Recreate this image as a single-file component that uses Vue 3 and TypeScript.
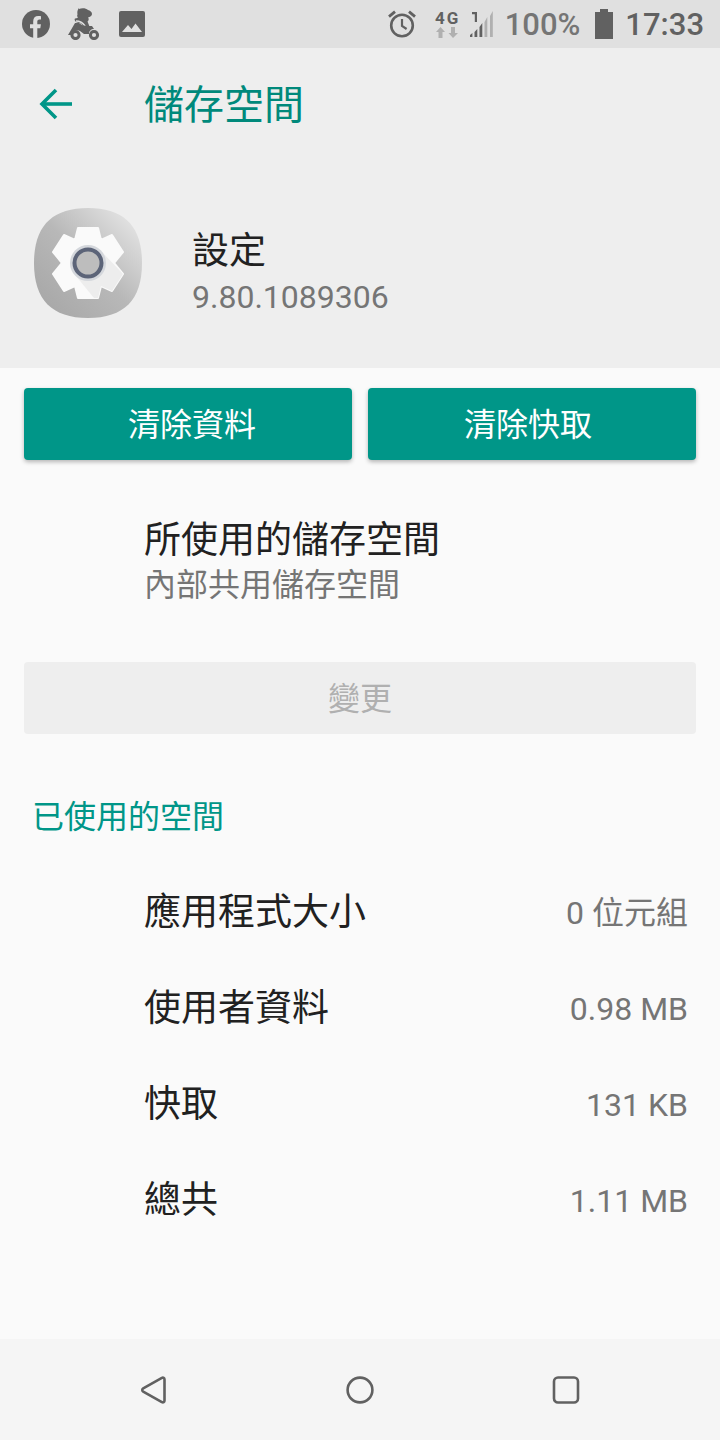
<script setup lang="ts">
interface Row {
  label: string;
  value: string;
}

const rows: Row[] = [
  { label: "應用程式大小", value: "0 位元組" },
  { label: "使用者資料", value: "0.98 MB" },
  { label: "快取", value: "131 KB" },
  { label: "總共", value: "1.11 MB" },
];
</script>

<template>
  <div class="screen">
    <div class="status">
      <div class="status-left">
        <svg class="ic-fb" width="28" height="28" viewBox="0 0 28 28">
          <circle cx="14" cy="14" r="14" fill="#616161" />
          <path d="M11.2 28V18.2H8v-4h3.2v-2.9c0-3.4 2-5.2 5-5.2 1.4 0 2.8.2 2.8.2v3.3h-1.6c-1.6 0-2.1 1-2.1 2v2.6h3.6l-.6 4h-3V28z" fill="#e0e0e0" />
        </svg>
        <svg class="ic-bike" width="32" height="32" viewBox="0 0 32 32">
          <path d="M11 1c3-1.500 7-1 9 1 2 .5 4 2 4 4 0 2-2 3-4 3.500 1 1 1 3-.5 4l2 5 .5 1h-5l-4-4-4-1c-2-1-3-3-2-4 1 0 2-.5 3-1-1-1-1-2-.5-3-.5-2 0-5 1.500-6.500z" fill="#616161" />
          <path d="M8 13c3 0 7 2 9 5" stroke="#e0e0e0" stroke-width="1.600" fill="none" />
          <path d="M7 15l-7 12h3l2-3c2-2 5-2 7-1l4 3h5c0-3 2-5 5-5l-2-3H18l-4-1-3-2z" fill="#616161" />
          <circle cx="7.500" cy="27" r="3.600" fill="#e0e0e0" stroke="#616161" stroke-width="3" />
          <circle cx="26" cy="27" r="3.600" fill="#e0e0e0" stroke="#616161" stroke-width="3" />
        </svg>
        <svg class="ic-img" width="26" height="26" viewBox="0 0 26 26">
          <rect width="26" height="26" rx="2" fill="#616161" />
          <path d="M3 21l6-7 3.500 4 4-5.500L23 21z" fill="#e0e0e0" />
        </svg>
      </div>
      <div class="status-right">
        <svg class="ic-alarm" width="30" height="30" viewBox="0 0 30 30" fill="none" stroke="#616161">
          <circle cx="15" cy="16.500" r="10.800" stroke-width="2.600" />
          <path d="M15 10v7l4.600 3" stroke-width="2.200" />
          <path d="M2 7.600L8 2.600M28 7.600L22 2.600" stroke-width="2.800" />
        </svg>
        <div class="net">
          <span class="net-label">4G</span>
          <svg width="22" height="11" viewBox="0 0 22 11" fill="#b0b0b0">
            <path d="M4.500 0L9 5H6.500v6h-4V5H0z" />
            <path d="M17 11l-4.500-5H15V0h4v6h3z" />
          </svg>
        </div>
        <svg class="ic-signal" width="24" height="30" viewBox="0 0 24 30">
          <path d="M2 3h5v10H4.800V5.200H2z" fill="#616161" />
          <path d="M0 28h2.400v-4L0 26zM4.500 28h2.800v-8l-2.800 3zM9.500 28h2.800V14l-2.800 4z" fill="#616161" />
          <path d="M14.500 28h2.800V8l-2.800 5zM20 28h2.800V2L20 7z" fill="#b0b0b0" />
        </svg>
        <span class="pct">100%</span>
        <svg class="ic-batt" width="18" height="30" viewBox="0 0 18 30">
          <path d="M5 0h8v3h5v27H0V3h5z" fill="#616161" />
        </svg>
        <span class="clock">17:33</span>
      </div>
    </div>

    <header class="head">
      <div class="toolbar">
        <svg class="ic-back" width="34" height="32" viewBox="0 0 34 32" fill="none" stroke="#009688" stroke-width="3.600">
          <path d="M33 16H3" />
          <path d="M17 2L3 16l14 14" />
        </svg>
        <h1 class="title">儲存空間</h1>
      </div>
      <div class="app">
        <svg class="app-icon" width="108" height="110" viewBox="0 0 108 110">
          <defs>
            <linearGradient id="squircle" x1="0.9" y1="0.1" x2="0.1" y2="0.9">
              <stop offset="0" stop-color="#e2e2e2" />
              <stop offset="0.5" stop-color="#b8b8b8" />
              <stop offset="1" stop-color="#a8a8a8" />
            </linearGradient>
          </defs>
          <path d="M54 0C90 0 108 18 108 55s-18 55-54 55S0 92 0 55 18 0 54 0z" fill="url(#squircle)" />
          <path d="M44 20H64L67 32L78 27L89 44L80 55L89 66L78 83L67 78L64 90H44L41 78L30 83L19 66L28 55L19 44L30 27L41 32Z" fill="#fafafa" stroke="#fafafa" stroke-width="2" stroke-linejoin="round" />
          <path d="M68 44L89 66L78 83L67 78L64 90H60L42 68Z" fill="#ededed" />
          <circle cx="54" cy="55" r="18" fill="#d4d7dc" />
          <circle cx="54" cy="55" r="13.500" fill="#bdbdbd" stroke="#5c6478" stroke-width="4" />
        </svg>
        <div class="app-meta">
          <div class="app-name">設定</div>
          <div class="app-ver">9.80.1089306</div>
        </div>
      </div>
    </header>

    <main class="body">
      <div class="actions">
        <button class="btn btn-left" type="button">清除資料</button>
        <button class="btn btn-right" type="button">清除快取</button>
      </div>

      <div class="storage">
        <div class="storage-title">所使用的儲存空間</div>
        <div class="storage-sub">內部共用儲存空間</div>
      </div>

      <div class="change">變更</div>

      <div class="section">已使用的空間</div>

      <div class="rows">
        <div v-for="r in rows" :key="r.label" class="row">
          <span class="row-label">{{ r.label }}</span>
          <span class="row-value">{{ r.value }}</span>
        </div>
      </div>
    </main>

    <nav class="nav">
      <svg width="28" height="28" viewBox="0 0 28 28" fill="none" stroke="#616161" stroke-width="2.600" stroke-linejoin="round">
        <path d="M24.500 3.500c0-1.600-1.300-2.300-2.600-1.600L3.200 12.400c-1.300.8-1.300 2.400 0 3.200l18.700 10.500c1.300.7 2.600 0 2.600-1.600z" />
      </svg>
      <svg width="28" height="28" viewBox="0 0 28 28" fill="none" stroke="#616161" stroke-width="2.600">
        <circle cx="14" cy="14" r="12.400" />
      </svg>
      <svg width="28" height="28" viewBox="0 0 28 28" fill="none" stroke="#616161" stroke-width="2.600">
        <rect x="2" y="1.500" width="24" height="25" rx="4" />
      </svg>
    </nav>
  </div>
</template>

<style scoped>
.screen {
  width: 720px;
  height: 1440px;
  display: flex;
  flex-direction: column;
  overflow: hidden;
  background: #fafafa;
  font-family: "Noto Sans CJK TC", Roboto, sans-serif;
}

.status {
  height: 48px;
  flex: none;
  display: flex;
  justify-content: space-between;
  align-items: center;
  padding: 0 16px 0 22px;
  background: #e0e0e0;
  color: #616161;
  font-family: Roboto, sans-serif;
}
.status-left,
.status-right {
  display: flex;
  align-items: center;
}
.ic-bike {
  margin-left: 18px;
}
.ic-img {
  margin-left: 19px;
}
.ic-alarm {
  margin-right: 18px;
}
.net {
  width: 24px;
  display: flex;
  flex-direction: column;
  align-items: center;
  margin-right: 11px;
}
.net-label {
  font-size: 17px;
  line-height: 17px;
  font-weight: 700;
  letter-spacing: 2px;
  margin-right: -2px;
}
.ic-signal {
  margin-right: 11px;
}
.pct {
  font-size: 31px;
  font-weight: 500;
  color: #757575;
  margin-right: 15px;
}
.ic-batt {
  margin-right: 12px;
}
.clock {
  font-size: 31px;
  font-weight: 500;
}

.head {
  height: 320px;
  flex: none;
  background: #eeeeee;
}
.toolbar {
  height: 112px;
  display: flex;
  align-items: center;
  padding-left: 39px;
}
.title {
  margin: 0 0 4px 71px;
  font-size: 40px;
  font-weight: 400;
  color: #00897b;
}
.app {
  display: flex;
  align-items: flex-start;
  padding: 48px 0 0 34px;
}
.app-meta {
  margin: 16px 0 0 50px;
}
.app-name {
  font-size: 37px;
  line-height: 48px;
  color: #212121;
}
.app-ver {
  font-family: Roboto, sans-serif;
  font-size: 32px;
  line-height: 46px;
  margin-top: 2px;
  color: #757575;
}

.body {
  flex: 1;
  padding: 20px 24px 0;
}
.actions {
  display: flex;
  gap: 16px;
}
.btn {
  flex: 1;
  height: 72px;
  border: none;
  border-radius: 4px;
  background: #009688;
  color: #fff;
  font: inherit;
  font-size: 32px;
  box-shadow: 0 2px 4px rgba(0, 0, 0, 0.28);
}
.btn-left {
  padding: 0 0 4px 8px;
}
.btn-right {
  padding: 0 8px 4px 0;
}
.storage {
  margin-top: 50px;
  padding-left: 120px;
}
.storage-title {
  font-size: 37px;
  line-height: 54px;
  color: #212121;
}
.storage-sub {
  font-size: 32px;
  line-height: 37px;
  color: #757575;
}
.change {
  margin-top: 61px;
  height: 72px;
  padding-bottom: 4px;
  box-sizing: border-box;
  display: flex;
  align-items: center;
  justify-content: center;
  border-radius: 4px;
  background: #eeeeee;
  color: #b0b0b0;
  font-size: 32px;
}
.section {
  margin: 58px 0 0 8px;
  font-size: 32px;
  line-height: 44px;
  color: #009688;
}
.rows {
  margin-top: 25px;
}
.row {
  height: 96px;
  display: flex;
  align-items: center;
  justify-content: space-between;
  padding: 0 8px 0 120px;
}
.row-label {
  font-size: 37px;
  line-height: 54px;
  color: #212121;
}
.row-value {
  font-family: Roboto, "Noto Sans CJK TC", sans-serif;
  font-size: 32px;
  line-height: 40px;
  margin-top: 8px;
  color: #757575;
}

.nav {
  height: 101px;
  flex: none;
  display: flex;
  align-items: center;
  justify-content: space-between;
  padding: 0 140px;
  background: #f5f5f5;
}
</style>
